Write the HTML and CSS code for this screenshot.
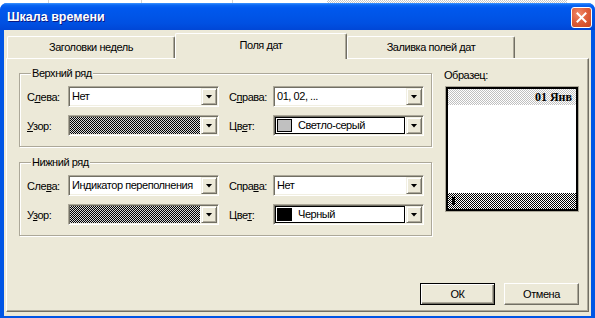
FILE: index.html
```html
<!DOCTYPE html>
<html lang="ru">
<head>
    <meta charset="UTF-8">
    <meta name="viewport" content="width=device-width, initial-scale=1.0">
    <title>Шкала времени</title>
    <link rel="stylesheet" href="styles.css">
</head>
<body>
    <div class="backdrop"><span class="cell w49"></span><span class="cell w93"></span><span class="cell w91"></span><span class="dots"></span></div>
    <div class="window">
        <div class="titlebar">
            <span class="title">Шкала времени</span>
            <button class="close" aria-label="Закрыть">
                <svg width="11" height="11" viewBox="0 0 11 11"><path d="M1.5 1.5 L9.5 9.5 M9.5 1.5 L1.5 9.5" stroke="#fff" stroke-width="2" stroke-linecap="square"/></svg>
            </button>
        </div>
        <div class="client">
            <div class="tabs">
                <div class="tab">Заголовки недель</div>
                <div class="tab active">Поля дат</div>
                <div class="tab">Заливка полей дат</div>
            </div>
            <div class="panel">
                <div class="panel-body">
                    <div class="groups">
                        <div class="group">
                            <div class="group-title">Верхний ряд</div>
                            <div class="rows">
                                <label>С<u>л</u>ева:</label>
                                <div class="combo"><span class="value">Нет</span><span class="arrow"></span></div>
                                <label class="lbl-right">С<u>п</u>рава:</label>
                                <div class="combo"><span class="value">01, 02, ...</span><span class="arrow"></span></div>
                                <label><u>У</u>зор:</label>
                                <div class="combo"><span class="value pattern"></span><span class="arrow"></span></div>
                                <label class="lbl-right">Цв<u>е</u>т:</label>
                                <div class="combo color"><span class="value"><span class="swatch light"></span>Светло-серый</span><span class="arrow"></span></div>
                            </div>
                        </div>
                        <div class="group">
                            <div class="group-title">Нижний ряд</div>
                            <div class="rows">
                                <label>Сле<u>в</u>а:</label>
                                <div class="combo"><span class="value">Индикатор переполнения</span><span class="arrow"></span></div>
                                <label class="lbl-right">Спра<u>в</u>а:</label>
                                <div class="combo"><span class="value">Нет</span><span class="arrow"></span></div>
                                <label>У<u>з</u>ор:</label>
                                <div class="combo"><span class="value pattern"></span><span class="arrow"></span></div>
                                <label class="lbl-right">Цве<u>т</u>:</label>
                                <div class="combo color"><span class="value"><span class="swatch dark"></span>Черный</span><span class="arrow"></span></div>
                            </div>
                        </div>
                    </div>
                    <div class="sample-col">
                        <div class="sample-label">Образец:</div>
                        <div class="sample">
                            <div class="sample-top">01 Янв</div>
                            <div class="sample-mid"></div>
                            <div class="sample-bottom"><span class="mark"></span></div>
                        </div>
                    </div>
                </div>
                <div class="footer">
                    <button class="btn default">ОК</button>
                    <button class="btn">Отмена</button>
                </div>
            </div>
        </div>
    </div>
</body>
</html>
```

FILE: styles.css
```css
body { margin: 0; background: #fff; font-family: "Liberation Sans", Arial, sans-serif; font-size: 11px; letter-spacing: -0.45px; color: #000; overflow: hidden; }

.backdrop { height: 3px; display: flex; }
.backdrop .cell { border-right: 1px solid #d4d4d4; }
.backdrop .w49 { width: 48px; }
.backdrop .w93 { width: 92px; }
.backdrop .w91 { width: 90px; }
.backdrop .dots { width: 240px; margin-left: 94px; background: repeating-conic-gradient(#c8c8c8 0 25%, #fff 0 50%) 0 0 / 2px 2px; }

.window { width: 595px; height: 315px; background: #0055e5; border-radius: 7px 7px 0 0; display: flex; flex-direction: column; overflow: hidden; }

.titlebar { height: 27px; flex: none; display: flex; align-items: center; justify-content: space-between; padding: 1px 3px 0 7px; box-sizing: border-box;
    background: linear-gradient(to bottom, #3d95ff 0, #0a66f3 2px, #0058ee 5px, #0055e8 45%, #0050e2 75%, #0046d6 100%); }
.title { color: #fff; font-weight: bold; font-size: 12.5px; letter-spacing: 0; text-shadow: 1px 1px 0 #0a1883; }
.close { width: 21px; height: 21px; padding: 0; border: 1px solid #fff; border-radius: 3px; display: flex; align-items: center; justify-content: center;
    background: radial-gradient(circle at 35% 30%, #f08a6a 0, #e0603c 45%, #c9441f 100%); }

.client { flex: 1; margin: 0 4px 2px; background: #ece9d8; padding: 3px 2px 4px; display: flex; flex-direction: column; }

.tabs { display: flex; align-items: flex-end; height: 25px; padding-left: 1px; }
.tab { box-sizing: border-box; width: 168px; height: 22px; display: flex; align-items: center; justify-content: center; padding-bottom: 1px;
    border-top: 1px solid #fff; border-left: 1px solid #fff; border-right: 1px solid #716f64; border-radius: 2px 2px 0 0;
    box-shadow: inset -1px 0 0 #aca899; }
.tab.active { width: 172px; height: 26px; margin-bottom: -1px; padding-bottom: 3px; background: #ece9d8; position: relative; z-index: 1; }

.panel { box-sizing: border-box; height: 254px; border-top: 1px solid #fff; border-left: 1px solid #fff; border-right: 1px solid #716f64; border-bottom: 1px solid #716f64;
    box-shadow: inset -1px -1px 0 #aca899; display: flex; flex-direction: column; }
.panel-body { display: flex; padding: 14px 0 0 12px; }

.group { box-sizing: border-box; width: 413px; border: 1px solid #aca899; box-shadow: inset 1px 1px 0 #fff, 1px 1px 0 #fff; padding: 0 7px 10px; }
.group + .group { margin-top: 15px; }
.group-title { display: table; margin: -7px 0 0 4px; padding: 0 1px; line-height: 13px; background: #ece9d8; }

.rows { display: grid; grid-template-columns: 41px 151px 54px 151px; grid-auto-rows: 21px; row-gap: 8px; margin-top: 6px; }
.rows label { align-self: center; }
.rows .lbl-right { padding-left: 10px; }

.combo { box-sizing: border-box; height: 21px; display: flex; padding: 1px; background: #fff;
    border: 1px solid; border-color: #aca899 #fff #fff #aca899; box-shadow: inset 1px 1px 0 #716f64, inset -1px -1px 0 #f1efe2; }
.combo .value { flex: 1; line-height: 17px; padding-left: 2px; white-space: nowrap; overflow: hidden; display: flex; align-items: center; }
.combo .value.pattern { padding: 0; margin: 0 1px 0 0; background: repeating-conic-gradient(#000 0 25%, #d8d8d8 0 50%) 0 0 / 2px 2px; }
.combo.color .value { border: 1px solid #000; padding-left: 0; margin-right: 1px; }
.swatch { box-sizing: border-box; width: 15px; height: 13px; border: 1px solid #000; margin: 0 6px 0 1px; flex: none; }
.swatch.light { background: #c0c0c0; }
.swatch.dark { background: #000; }

.arrow { box-sizing: border-box; width: 16px; flex: none; background: #ece9d8; display: flex; align-items: center; justify-content: center;
    border: 1px solid; border-color: #f1efe2 #716f64 #716f64 #f1efe2; box-shadow: inset 1px 1px 0 #fff, inset -1px -1px 0 #aca899; }
.arrow::after { content: ""; width: 7px; height: 4px; background: #000; clip-path: polygon(0 0, 100% 0, 50% 100%); }

.sample-col { margin-left: 12px; }
.sample-label { margin-top: -4px; line-height: 13px; }
.sample { box-sizing: border-box; width: 134px; height: 126px; margin: 4px 0 0 1px; padding: 2px; background: #fff;
    border: 1px solid #aca899; box-shadow: inset 0 0 0 2px #000; display: flex; flex-direction: column; }
.sample-top { height: 16px; line-height: 16px; text-align: right; padding-right: 4px; font-family: "Liberation Serif", "Times New Roman", serif; font-weight: bold; font-size: 12px; letter-spacing: 0;
    background: repeating-conic-gradient(#c0c0c0 0 25%, #fff 0 50%) 0 0 / 2px 2px; }
.sample-mid { flex: 1; }
.sample-bottom { height: 16px; background: repeating-conic-gradient(#000 0 25%, #fff 0 50%) 0 0 / 2px 2px; }
.mark { display: block; width: 3px; height: 8px; margin: 4px 0 0 4px; background: #000; }

.footer { margin-top: auto; display: flex; justify-content: flex-end; gap: 9px; padding: 0 9px 6px 0; }
.btn { box-sizing: border-box; width: 75px; height: 22px; padding: 0; font: inherit; letter-spacing: inherit; color: #000; background: #ece9d8;
    border: 1px solid; border-color: #fff #716f64 #716f64 #fff; box-shadow: inset -1px -1px 0 #aca899; }
.btn.default { border-color: #000; box-shadow: inset 1px 1px 0 #fff, inset -1px -1px 0 #716f64, inset -2px -2px 0 #aca899; }
```
